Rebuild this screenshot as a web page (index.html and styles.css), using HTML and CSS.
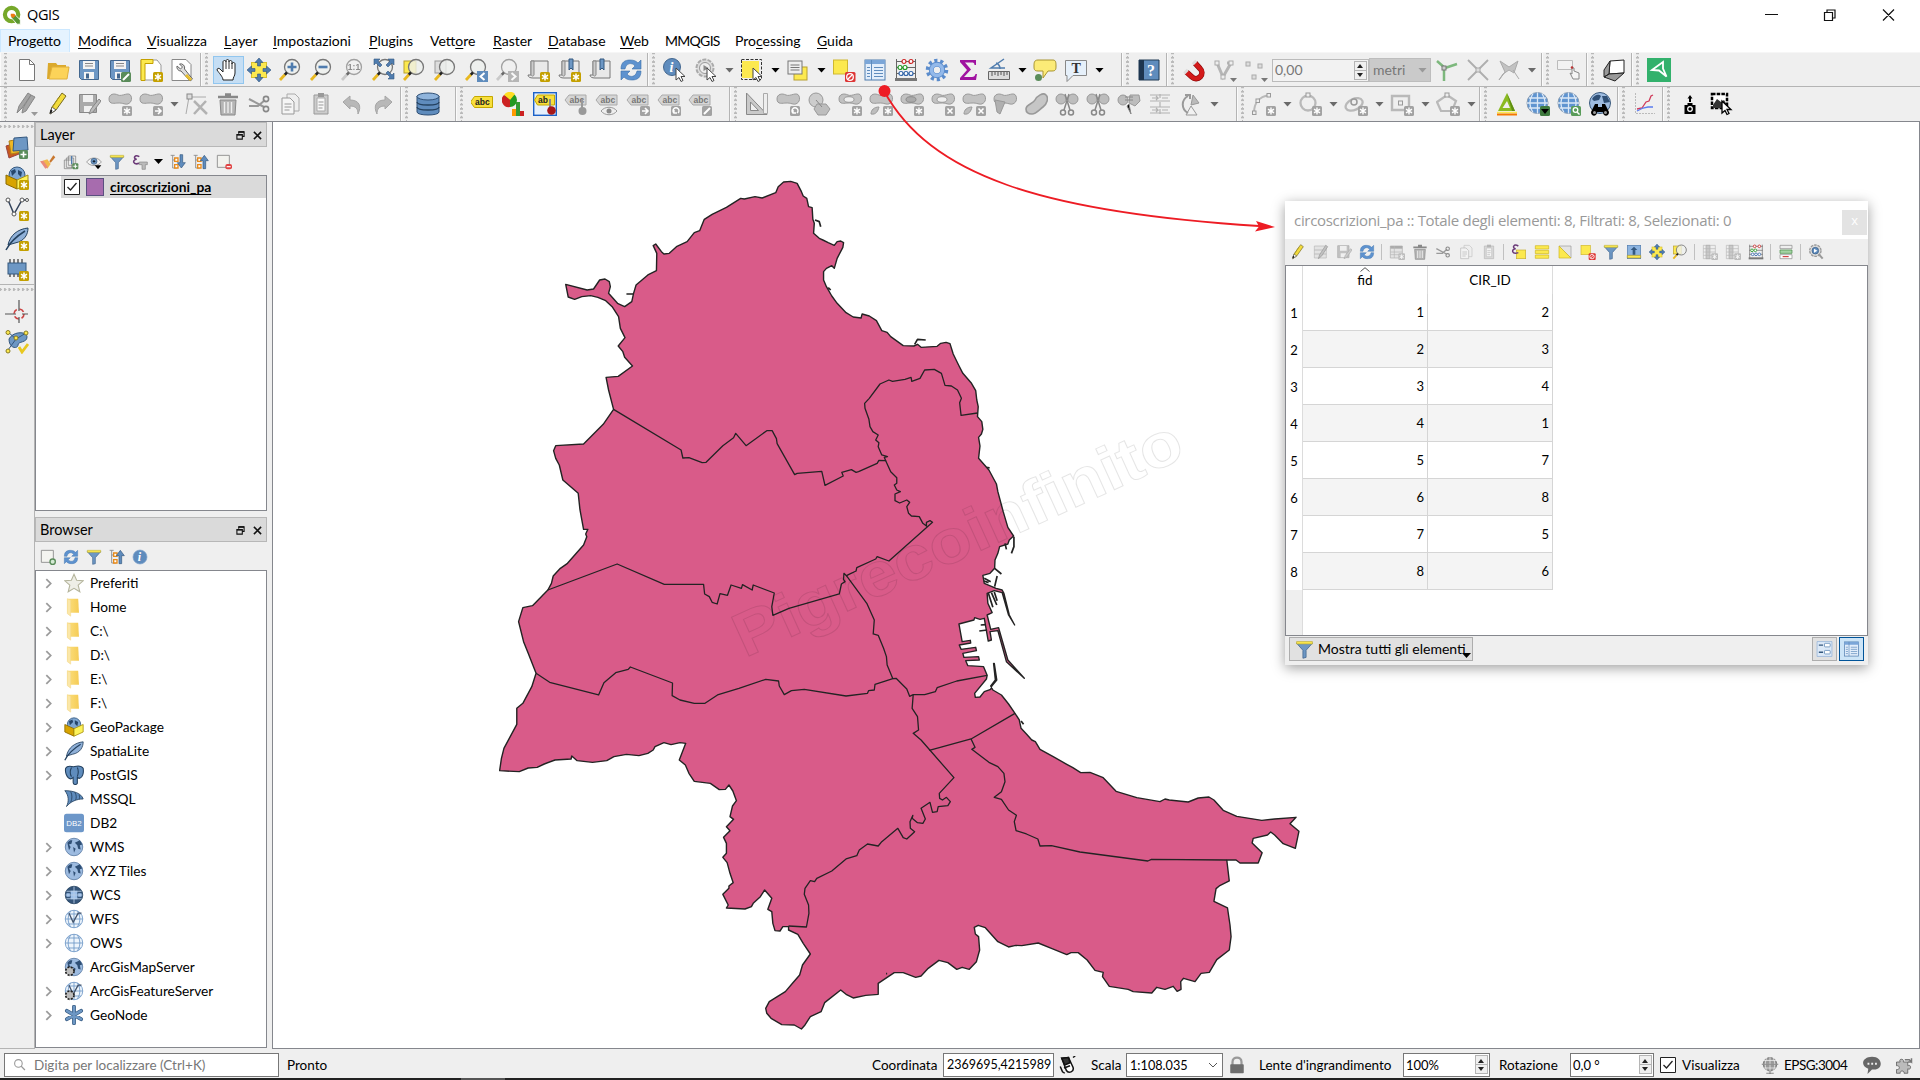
FILE: index.html
```html
<!DOCTYPE html>
<html lang="it">
<head>
<meta charset="utf-8">
<title>QGIS</title>
<link rel="stylesheet" href="styles.css">
</head>
<body>
<svg class="defs" xmlns="http://www.w3.org/2000/svg">
<defs>
<g id="bs"><rect x="14" y="14" width="10" height="10" rx="1.5" fill="#c4a000"/><path d="M19 15.5v7M16 17.2l6 3.6M22 17.2l-6 3.6" stroke="#fff" stroke-width="1.5"/></g>
<g id="bg"><rect x="14" y="14" width="10" height="10" rx="1.5" fill="#a2a2a2"/><path d="M19 15.5v7M16 17.2l6 3.6M22 17.2l-6 3.6" stroke="#fff" stroke-width="1.4"/></g>
<g id="bx"><rect x="14" y="14" width="10" height="10" rx="1.5" fill="#a2a2a2"/><path d="M16.500 16.500l5 5m0-5l-5 5" stroke="#fff" stroke-width="1.6"/></g>
<g id="bplus"><rect x="14" y="14" width="9" height="9" rx="1.500" fill="#5a8c5a"/><path d="M18.500 15.500v6M15.500 18.500h6" stroke="#fff" stroke-width="1.600"/></g>
<g id="bd"><rect x="14" y="14" width="10" height="10" rx="1.5" fill="#a2a2a2"/></g>
<g id="cur"><path d="M13 10v12l3-2.500 2 4 2-1-2-4h4z" fill="#fff" stroke="#444" stroke-width="1"/></g>
<g id="lens"><circle cx="14" cy="9" r="7.500" fill="#eef0ee" fill-opacity=".8" stroke="#777" stroke-width="1.300"/><path d="M9 14.500L6.500 17" stroke="#222" stroke-width="2.500"/><path d="M6.800 16.800L2 22" stroke="#e8b820" stroke-width="2.800"/></g>
<g id="blob"><path d="M1 7c0-5 5-6 9-4s11-4 13 1-2 9-6 8-4-1-7-1-9 2-9-4z" fill="#c2c2c2" stroke="#9a9a9a"/></g>
<g id="tag"><path d="M1 8l4-5h17v10H5z" fill="#d6d6d6" stroke="#aaa"/><text x="5.500" y="11" font-size="8.500" font-weight="700" fill="#777" font-family="Liberation Sans">abc</text></g>
<g id="globe"><circle cx="12" cy="12" r="10.500" fill="#9dbbe0" stroke="#5a7ba3"/><path d="M4 7c3-4 5-3 6-3l-1 4-3 1 2 3-2 4zM13 7l6-3 3 5-3 1 1 5-3-1-1-4zM11 12l3 2-2 5z" fill="#2f4f75"/></g>
<g id="wire"><circle cx="12" cy="12" r="10.500" fill="#eef5fc" stroke="#6b95c5"/><path d="M1.500 12h21M4 6h16M4 18h16M12 1.500v21M8 2.500c-4 6-4 13 0 19M16 2.500c4 6 4 13 0 19" fill="none" stroke="#6b95c5"/></g>
<g id="funnel0"><path d="M2 4h20l-8 9v9l-4 1v-10z" fill="#6d97c4" stroke="#43678f"/><path d="M2 2h20v3H2z" fill="#fce94f" stroke="#b8a830" stroke-width=".8"/></g>
<linearGradient id="yg"><stop offset="0" stop-color="#fce080"/><stop offset="1" stop-color="#f5cb55"/></linearGradient>
<symbol id="qgis" viewBox="0 0 24 24"><circle cx="11.500" cy="11.500" r="8" fill="none" stroke="#76a82a" stroke-width="5"/><path d="M11 11l4 0 7 7v5h-4l-7-8z" fill="#589632" stroke="#fff"/><path d="M10.500 10.500h4l2 2-3 3-3-2z" fill="#ee7913"/></symbol>
<symbol id="new" viewBox="0 0 24 24"><path d="M4.500 1.500h10l5 5v16h-15z" fill="#fff" stroke="#777"/><path d="M14.500 1.500v5h5" fill="none" stroke="#777"/></symbol>
<symbol id="open" viewBox="0 0 24 24"><path d="M2 5h8l1.500 2H20v4H6L3 21H1z" fill="#dba92c"/><path d="M3 21L6 9h17l-2 12z" fill="#fcd359" stroke="#e0b03a"/></symbol>
<symbol id="save" viewBox="0 0 24 24"><path d="M2.500 2.500h19v19h-17l-2-2z" fill="#6d97c4" stroke="#43678f"/><path d="M6 3h12v8H6z" fill="#f4f4f4"/><path d="M8 5.500h8M8 8h8" stroke="#888"/><path d="M7 14h10v7H7z" fill="#f4f4f4"/><path d="M9 15.500h3v5H9z" fill="#43678f"/></symbol>
<symbol id="saveas" viewBox="0 0 24 24"><use href="#save"/><rect x="13" y="14" width="10" height="10" rx="1.500" fill="#5a8c5a"/><path d="M15 22l6-6" stroke="#fff" stroke-width="2"/></symbol>
<symbol id="layout" viewBox="0 0 24 24"><path d="M2 2h16l4 5v15H2z" fill="#fff" stroke="#999"/><path d="M2 1.500h12v4H6v17H2z" fill="#fce94f" stroke="#c4a000"/><use href="#bs"/></symbol>
<symbol id="wrench" viewBox="0 0 24 24"><path d="M2 1.500h14l5 5v16H2z" fill="#fff" stroke="#888"/><path d="M7 8a4 4 0 0 0 4 5l9 10 2.500-2-8-10a4 4 0 0 0-5-5l3 3-2 2z" fill="#ddd" stroke="#666"/><path d="M16 17l5 5" stroke="#e8c030" stroke-width="3"/></symbol>
<symbol id="pan" viewBox="0 0 24 24"><path d="M7 22c0-3-4-7-6-10 0-2 2-2 3-1l3 3V4c0-2 3-2 3 0v-1c0-2 3-2 3 0v1c0-2 3-2 3 0v2c0-2 3-2 3 0v9c0 3-2 4-2 7z" fill="#fff" stroke="#222"/><path d="M10 4v7M13 4v7M16 5v6" stroke="#333" fill="none"/></symbol>
<symbol id="pansel" viewBox="0 0 24 24"><rect x="4.500" y="4.500" width="15" height="15" fill="#fce94f" stroke="#d8c030"/><path d="M12 0l4 4.500h-2.500V8h-3V4.500H8zM12 24l4-4.500h-2.500V16h-3v3.500H8zM0 12l4.500-4v2.500H8v3H4.500V16zM24 12l-4.500-4v2.500H16v3h3.500V16z" fill="#4f7cae" stroke="#2f5680" stroke-width=".6"/></symbol>
<symbol id="zin" viewBox="0 0 24 24"><use href="#lens"/><path d="M14 4.500v9M9.500 9h9" stroke="#4f7cae" stroke-width="2.600"/></symbol>
<symbol id="zout" viewBox="0 0 24 24"><use href="#lens"/><path d="M9.500 9h9" stroke="#4f7cae" stroke-width="2.600"/></symbol>
<symbol id="z11" viewBox="0 0 24 24"><use href="#lens"/><text x="14" y="12" text-anchor="middle" font-size="8.500" font-weight="700" fill="#555" font-family="Liberation Sans">1:1</text></symbol>
<symbol id="zfull" viewBox="0 0 24 24"><use href="#lens"/><path d="M3 1h6L7 3l4 4-2 2-4-4-2 2zM23 1h-6l2 2-4 4 2 2 4-4 2 2zM23 21h-6l2-2-4-4 2-2 4 4 2-2z" fill="#4f7cae" stroke="#34587f" stroke-width=".6"/></symbol>
<symbol id="zsel" viewBox="0 0 24 24"><rect x="2" y="3" width="12" height="12" fill="#fce94f" stroke="#b8a030"/><use href="#lens"/></symbol>
<symbol id="zlay" viewBox="0 0 24 24"><rect x="2" y="3" width="11" height="12" fill="#ddd" stroke="#999"/><use href="#lens"/></symbol>
<symbol id="zlast" viewBox="0 0 24 24"><use href="#lens"/><rect x="13" y="13" width="11" height="11" fill="#5f8cbd"/><path d="M20.500 15l-4 3.500 4 3.500" fill="none" stroke="#fff" stroke-width="2"/></symbol>
<symbol id="znext" viewBox="0 0 24 24"><use href="#lens"/><rect x="13" y="13" width="11" height="11" fill="#999"/><path d="M16.500 15l4 3.500-4 3.500" fill="none" stroke="#fff" stroke-width="2"/></symbol>
<symbol id="mapv" viewBox="0 0 24 24"><path d="M5 3h17v17H7c-3 0-5-1-5-3h3z" fill="#e9e9e9" stroke="#777"/><path d="M5 3v13c0 2 2 3 3 1V3z" fill="#ccc" stroke="#888"/></symbol>
<symbol id="mapn" viewBox="0 0 24 24"><use href="#mapv"/><use href="#bs"/></symbol>
<symbol id="bmk" viewBox="0 0 24 24"><use href="#mapv"/><path d="M12 1h4v11l-2-2-2 2z" fill="#6d97c4" stroke="#34587f"/></symbol>
<symbol id="bmn" viewBox="0 0 24 24"><use href="#mapv"/><path d="M12 1h4v11l-2-2-2 2z" fill="#6d97c4" stroke="#34587f"/><use href="#bs"/></symbol>
<symbol id="refresh" viewBox="0 0 24 24"><path d="M2 11C2 4 6 2 11 2c4 0 6 1 8 3l3-3v9h-9l3-3c-3-4-9-3-10 3zM22 13c0 7-4 9-9 9-4 0-6-1-8-3l-3 3v-9h9l-3 3c3 4 9 3 10-3z" fill="#5d92cf" stroke="#3b6ea8" stroke-width=".6"/></symbol>
<symbol id="info" viewBox="0 0 24 24"><circle cx="9" cy="9" r="8.500" fill="#5f8cbd" stroke="#43678f"/><text x="6.500" y="14" font-size="14" font-style="italic" font-weight="700" fill="#fff" font-family="Liberation Serif">i</text><use href="#cur"/></symbol>
<symbol id="inf" viewBox="0 0 24 24"><circle cx="12" cy="12" r="10.500" fill="#5f8cbd" stroke="#7fa3cb"/><text x="8.500" y="18" font-size="18" font-style="italic" font-weight="700" fill="#fff" font-family="Liberation Serif">i</text></symbol>
<symbol id="action" viewBox="0 0 24 24"><circle cx="11" cy="10" r="8.500" fill="#ddd" stroke="#aaa" stroke-width="2" stroke-dasharray="4 1.300"/><circle cx="11" cy="10" r="5.500" fill="#eee" stroke="#999"/><path d="M9.500 7v6l5-3z" fill="#888"/><use href="#cur"/></symbol>
<symbol id="select" viewBox="0 0 24 24"><rect x="2" y="3" width="17" height="17" fill="#fce94f"/><rect x="1.500" y="1.500" width="20" height="20" fill="none" stroke="#333" stroke-dasharray="3 1.500"/><use href="#cur"/></symbol>
<symbol id="selform" viewBox="0 0 24 24"><rect x="8" y="9" width="13" height="13" fill="#fce94f" stroke="#b8a030"/><rect x="2" y="3" width="14" height="13" fill="#eee" stroke="#777"/><path d="M4.500 7h9M4.500 9.500h9M4.500 12h9" stroke="#777"/></symbol>
<symbol id="desel" viewBox="0 0 24 24"><rect x="1.500" y="2" width="14" height="14" fill="#fce94f" stroke="#d0b830"/><rect x="13" y="14" width="10.500" height="10" rx="1.500" fill="#dd3434"/><circle cx="18" cy="19" r="3.300" fill="none" stroke="#fff" stroke-width="1.300"/><path d="M16 21l4-4" stroke="#fff" stroke-width="1.300"/></symbol>
<symbol id="table" viewBox="0 0 24 24"><rect x="2" y="2" width="20" height="20" fill="#e3eefb" stroke="#4f7cae"/><path d="M2 2h20v4H2z" fill="#7ba6d8"/><path d="M8.500 2v20M4 9.500h3M4 12.500h3M4 15.500h3M4 18.500h3M11 9.500h9M11 12.500h9M11 15.500h9M11 18.500h9" stroke="#5f8cbd"/></symbol>
<symbol id="abacus" viewBox="0 0 24 24"><path d="M2.500 1v21M21.500 1v21M2 3.500h20M2 9.500h20M2 15.500h20" stroke="#666" fill="none"/><path d="M1 20h22v3H1z" fill="#777"/><g fill="#fff" stroke-width="1.200"><g stroke="#c22"><circle cx="10" cy="3.500" r="2"/><circle cx="17" cy="3.500" r="2"/></g><g stroke="#292"><circle cx="6" cy="9.500" r="2"/><circle cx="11" cy="9.500" r="2"/></g><g stroke="#36a"><circle cx="7" cy="15.500" r="2"/><circle cx="12" cy="15.500" r="2"/><circle cx="17" cy="15.500" r="2"/></g></g></symbol>
<symbol id="gear" viewBox="0 0 24 24"><circle cx="12" cy="12" r="9" fill="none" stroke="#5b8ccc" stroke-width="4.500" stroke-dasharray="3 2.650"/><circle cx="12" cy="12" r="5.700" fill="none" stroke="#5b8ccc" stroke-width="5"/><circle cx="12" cy="12" r="5.500" fill="none" stroke="#93b9ea" stroke-width="3.500"/><circle cx="12" cy="12" r="2.800" fill="#efefef"/></symbol>
<symbol id="sigma" viewBox="0 0 24 24"><path d="M4 2h16v5h-1.500c0-2-1-2.500-3-2.500H9l6 7-7 7.500h8c2 0 3-1 3.500-3H21L20 22H4v-2l7-8-7-8z" fill="#a012a0"/></symbol>
<symbol id="measure" viewBox="0 0 24 24"><path d="M1.500 13.500h21v8h-21z" fill="#ddd" stroke="#666"/><path d="M5 14v4M8 14v3M11 14v4M14 14v3M17 14v4M20 14v3" stroke="#555"/><path d="M17 1L4 10h14M9 5c3 1 4 3 4 6" fill="none" stroke="#4f7cae" stroke-width="1.500"/></symbol>
<symbol id="tip" viewBox="0 0 24 24"><path d="M5 2h15c3 0 3 3 3 6s0 5-4 5h-4l-5 7 0-7H5c-4 0-4-2-4-5s0-6 4-6z" fill="#fceb77" stroke="#a89430"/><circle cx="5.500" cy="19.500" r="3.500" fill="#5a8c5a"/></symbol>
<symbol id="textt" viewBox="0 0 24 24"><path d="M1.500 2.500h21v15H9l-6 6v-6H1.500z" fill="#e6f0fa" stroke="#888"/><text x="7.500" y="15" font-size="14" font-weight="700" fill="#333" font-family="Liberation Serif">T</text></symbol>
<symbol id="help" viewBox="0 0 24 24"><path d="M2 2h20v20H2z" fill="#5f8cbd" stroke="#213a55"/><path d="M2 2h5v20H2z" fill="#1d3550"/><text x="10" y="18" font-size="16" font-weight="700" fill="#fff" font-family="Liberation Serif">?</text></symbol>
<symbol id="magnet" viewBox="0 0 24 24"><path d="M13 5l5 5.500a5.600 5.600 0 0 1-8 8.500L4.500 14" fill="none" stroke="#8c0a0a" stroke-width="5.600"/><path d="M13 5l5 5.500a5.600 5.600 0 0 1-8 8.500L4.500 14" fill="none" stroke="#d41a1a" stroke-width="4.400"/><path d="M11.500 3.500l2 2M3 12.500l2 2" stroke="#ddd" stroke-width="5"/></symbol>
<symbol id="vsnap" viewBox="0 0 24 24"><path d="M4 5l6 14L18 5M14 5h4" fill="none" stroke="#b5b5b5" stroke-width="3"/><g fill="#eee" stroke="#aaa"><rect x="2" y="3" width="4" height="4"/><rect x="16" y="3" width="4" height="4"/><rect x="8" y="17" width="4" height="4"/></g><path d="M17 20h7l-3.500 4z" fill="#777"/></symbol>
<symbol id="dots" viewBox="0 0 24 24"><g fill="#ddd" stroke="#aaa"><rect x="2" y="4" width="4" height="4"/><rect x="14" y="6" width="4" height="4"/><rect x="8" y="17" width="4" height="4"/></g><path d="M17 20h7l-3.500 4z" fill="#777"/></symbol>
<symbol id="topo" viewBox="0 0 24 24"><path d="M2 3l8 7 12-4M9 10v13" fill="none" stroke="#7db87d" stroke-width="2.500"/><rect x="7" y="8" width="4" height="4" fill="#ccc" stroke="#777"/></symbol>
<symbol id="inter" viewBox="0 0 24 24"><path d="M2 2l20 20M22 2L2 22" stroke="#aeaeae" stroke-width="1.800"/><rect x="10" y="10" width="4" height="4" fill="#ddd" stroke="#aaa"/></symbol>
<symbol id="trace" viewBox="0 0 24 24"><path d="M2 22l6-8-5-11 9 6 9-6-4 12-5-3-6 4zM16 12l6 9" fill="#c2c2c2" stroke="#aaa"/></symbol>
<symbol id="rsel" viewBox="0 0 24 24"><path d="M.5 2.500h15v9H.5z" fill="#f2f2f2" stroke="#bbb"/><path d="M15 10v6l-2-1 3 6h6v-6l-5-2v-3z" fill="#f4f4f4" stroke="#888"/><circle cx="15" cy="9.500" r="1.300" fill="#b33"/></symbol>
<symbol id="box3" viewBox="0 0 24 24"><path d="M8 3l14-1v13l-15 1z" fill="#fff" stroke="#222"/><path d="M8 3L2 12v7l5-3zM2 19l11 4 9-8-15 1z" fill="#999" stroke="#222"/></symbol>
<symbol id="green" viewBox="0 0 24 24"><path d="M0 0h24v24H0z" fill="#32b16c"/><path d="M5 12L16 4v6.500l3.500 8-7.500-6z" fill="none" stroke="#fff" stroke-width="1.800"/></symbol>
<symbol id="pens" viewBox="0 0 24 24"><path d="M2 21l2-7L13 1l3 2-9 13zM7 21l1-5 8-13 4 2-9 14z" fill="#a5a5a5" stroke="#888"/><path d="M16 20h7l-3.500 4z" fill="#999"/></symbol>
<symbol id="pen" viewBox="0 0 24 24"><path d="M4 22l2-7L16 1l4 3L10 18z" fill="#f3dc3c" stroke="#776a20"/><path d="M4 22l2-7 4 3z" fill="#fff" stroke="#555"/><path d="M4.500 21l1-3" stroke="#222" stroke-width="2"/><path d="M13 5l-7 11" stroke="#a89520" fill="none"/></symbol>
<symbol id="psave" viewBox="0 0 24 24"><path d="M2.500 2.500h17v18h-17z" fill="#aaa" stroke="#888"/><path d="M6 3h10v7H6zM7 14h8v6H7z" fill="#f0f0f0"/><path d="M12 22l2-5 8-10 2 2-8 11z" fill="#bbb" stroke="#888"/></symbol>
<symbol id="padd" viewBox="0 0 24 24"><use href="#blob"/><use href="#bg"/></symbol>
<symbol id="pmove" viewBox="0 0 24 24"><use href="#blob"/><use href="#bd"/><path d="M16 19h6m-3-3l3 3-3 3" fill="none" stroke="#fff" stroke-width="1.600"/></symbol>
<symbol id="vertex" viewBox="0 0 24 24"><path d="M4 5h17M4 5L1 22" stroke="#aaa" fill="none"/><rect x="2" y="2" width="5" height="5" fill="#ddd" stroke="#888"/><path d="M9 22L21 9M9 9l13 13" stroke="#b2b2b2" stroke-width="2.500"/></symbol>
<symbol id="trash" viewBox="0 0 24 24"><path d="M4 8h16l-1 15H5z" fill="#b5b5b5" stroke="#888"/><path d="M2 5h20M9 2.500h6" stroke="#888" stroke-width="2.500"/><path d="M8.500 10v11M12 10v11M15.500 10v11" stroke="#eee" stroke-width="1.400"/></symbol>
<symbol id="cut" viewBox="0 0 24 24"><path d="M2 7l15 8M2 14h9l7-6" stroke="#999" stroke-width="2" fill="none"/><circle cx="19" cy="7" r="2.600" fill="none" stroke="#888" stroke-width="1.600"/><circle cx="19" cy="17" r="2.600" fill="none" stroke="#888" stroke-width="1.600"/></symbol>
<symbol id="copy" viewBox="0 0 24 24"><path d="M9 2h8l4 4v13H9z" fill="#eee" stroke="#aaa"/><path d="M4 6h8l4 4v12H4z" fill="#f5f5f5" stroke="#999"/><path d="M6.500 12h7M6.500 15h7M6.500 18h5" stroke="#999"/></symbol>
<symbol id="paste" viewBox="0 0 24 24"><path d="M5 3h14v19H5z" fill="#ccc" stroke="#999"/><path d="M8 6h8v13H8z" fill="#f8f8f8" stroke="#aaa"/><path d="M9 1h6v4H9z" fill="#999"/><path d="M9.500 10h5M9.500 13h5M9.500 16h4" stroke="#999"/></symbol>
<symbol id="undo" viewBox="0 0 24 24"><path d="M3 10l7-6v4c9 0 12 6 8 14 0-5-2-8-8-8v3z" fill="#b8b8b8" stroke="#a6a6a6"/></symbol>
<symbol id="redo" viewBox="0 0 24 24"><path d="M21 10l-7-6v4C5 8 2 14 6 22c0-5 2-8 8-8v3z" fill="#b8b8b8" stroke="#a6a6a6"/></symbol>
<symbol id="db" viewBox="0 0 24 24"><path d="M1 4v16c0 4 22 4 22 0V4z" fill="#5f8cbd" stroke="#2f4f75"/><ellipse cx="12" cy="4.500" rx="11" ry="3.500" fill="#8fb4dc" stroke="#2f4f75"/><path d="M1 10c0 4 22 4 22 0M1 15c0 4 22 4 22 0" fill="none" stroke="#24415f" stroke-width="1.300"/></symbol>
<symbol id="abc" viewBox="0 0 24 24"><path d="M-.5 10l4-5.500h18v11h-18z" fill="#f8df3c" stroke="#c4a800"/><text x="4" y="13" font-size="8.500" font-weight="700" fill="#222" font-family="Liberation Sans">abc</text></symbol>
<symbol id="diag" viewBox="0 0 24 24"><circle cx="8" cy="8" r="7" fill="#292"/><path d="M8 8L2 3a7 7 0 0 1 11-1z" fill="#fd2"/><path d="M8 8L2 3a7 7 0 0 0 6 12z" fill="#c22"/><path d="M10 17h4v7h-4z" fill="#f90"/><path d="M14 10h4v14h-4z" fill="#393"/><path d="M18 19h4v5h-4z" fill="#c22"/></symbol>
<symbol id="abp" viewBox="0 0 24 24"><rect x=".7" y=".7" width="22.600" height="22.600" fill="#e6f0fc" stroke="#1c62c8" stroke-width="1.400"/><path d="M1.500 8l3-5h17v10h-17z" fill="#f8df3c" stroke="#c4a800"/><text x="5" y="11" font-size="8.500" font-weight="700" fill="#222" font-family="Liberation Sans">ab</text><path d="M17 7v9" stroke="#888" stroke-width="2"/><circle cx="18.500" cy="18.500" r="4.300" fill="#a81818"/></symbol>
<symbol id="abg" viewBox="0 0 24 24"><use href="#tag"/><path d="M18 7v9" stroke="#999" stroke-width="2"/><circle cx="18.500" cy="19" r="4" fill="#999"/></symbol>
<symbol id="abe" viewBox="0 0 24 24"><use href="#tag"/><path d="M6 19c4-5 12-5 16 0-4 5-12 5-16 0z" fill="#eee" stroke="#999"/><circle cx="14" cy="19" r="2.500" fill="#888"/></symbol>
<symbol id="abm" viewBox="0 0 24 24"><use href="#tag"/><use href="#bd"/><path d="M16 19h6m-3-3l3 3-3 3" fill="none" stroke="#fff" stroke-width="1.600"/></symbol>
<symbol id="abr" viewBox="0 0 24 24"><use href="#tag"/><use href="#bd"/><path d="M17 21a3 3 0 1 1 4 0M17 18v3h3" fill="none" stroke="#fff" stroke-width="1.400"/></symbol>
<symbol id="abd" viewBox="0 0 24 24"><use href="#tag"/><use href="#bd"/><path d="M16 22l6-6" stroke="#fff" stroke-width="2"/></symbol>
<symbol id="sqr" viewBox="0 0 24 24"><path d="M1.500 1v21.500H22zM5.500 10v8.500h8z" fill="#c9c9c9" stroke="#888" fill-rule="evenodd"/><path d="M18.500 1.500h4v20h-4z" fill="#eee" stroke="#aaa"/></symbol>
<symbol id="rot" viewBox="0 0 24 24"><use href="#blob"/><use href="#bd"/><path d="M17 21a3 3 0 1 1 4 0M17 18v3h3" fill="none" stroke="#fff" stroke-width="1.400"/></symbol>
<symbol id="simp" viewBox="0 0 24 24"><circle cx="9" cy="8" r="7" fill="#ccc" stroke="#999"/><path d="M10 12h9l4 5-4 6h-8l-4-6z" fill="#bdbdbd" stroke="#999"/><path d="M9 8l6 7" stroke="#888"/></symbol>
<symbol id="ring" viewBox="0 0 24 24"><use href="#blob"/><ellipse cx="11" cy="7.500" rx="5" ry="2.800" fill="#efefef" stroke="#999"/><use href="#bg"/></symbol>
<symbol id="part" viewBox="0 0 24 24"><use href="#blob"/><path d="M2 22c0-4 3-7 8-7-1 4-3 8-8 7z" fill="#bdbdbd" stroke="#999"/><use href="#bg"/></symbol>
<symbol id="fring" viewBox="0 0 24 24"><use href="#blob"/><ellipse cx="11" cy="7.500" rx="5" ry="2.800" fill="#aaa" stroke="#888"/><use href="#bg"/></symbol>
<symbol id="dring" viewBox="0 0 24 24"><use href="#blob"/><ellipse cx="11" cy="7.500" rx="5" ry="2.800" fill="#efefef" stroke="#999"/><use href="#bx"/></symbol>
<symbol id="dpart" viewBox="0 0 24 24"><use href="#blob"/><path d="M2 22c0-4 3-7 8-7-1 4-3 8-8 7z" fill="#bdbdbd" stroke="#999"/><use href="#bx"/></symbol>
<symbol id="resh" viewBox="0 0 24 24"><use href="#blob"/><path d="M2 8l2 12 3 2 5-12z" fill="#b0b0b0" stroke="#999"/></symbol>
<symbol id="off" viewBox="0 0 24 24"><path d="M2 17c0-5 7-5 9-9s8-8 11-5 1 9-3 12-7 7-11 7-6-2-6-5z" fill="#c6c6c6" stroke="#999" stroke-width="1.600"/></symbol>
<symbol id="split" viewBox="0 0 24 24"><circle cx="6" cy="7" r="5" fill="#bdbdbd" stroke="#999"/><circle cx="18" cy="7" r="5" fill="#bdbdbd" stroke="#999"/><path d="M10 2l5 16M14 2L9 18" stroke="#888" stroke-width="1.500"/><circle cx="8" cy="20.500" r="2.500" fill="none" stroke="#888" stroke-width="1.500"/><circle cx="16" cy="20.500" r="2.500" fill="none" stroke="#888" stroke-width="1.500"/></symbol>
<symbol id="merge" viewBox="0 0 24 24"><circle cx="6" cy="8" r="5" fill="#bdbdbd" stroke="#999"/><path d="M13 3h9l1 6-5 5-6-3z" fill="#bdbdbd" stroke="#999"/><path d="M8 5h8M8 8h8M12 12l2 10-4-8" stroke="#888"/></symbol>
<symbol id="mattr" viewBox="0 0 24 24"><path d="M2 3h20M2 9h20M2 15h20M2 21h20M12 2v4M12 10v5M12 17v5M4 6h6l-2-2m2 2l-2 2M20 6h-6M4 18h6l-2-2m2 2l-2 2M20 18h-6" fill="none" stroke="#b2b2b2" stroke-width="1.200"/></symbol>
<symbol id="rots" viewBox="0 0 24 24"><path d="M12 14l6 9H7z" fill="#f2f2f2" stroke="#999"/><path d="M14 3l6 8-8 2z" fill="#bbb" stroke="#999"/><path d="M9 21C2 17 2 8 9 4M6 3h5v4" fill="none" stroke="#999" stroke-width="2"/></symbol>
<symbol id="arc" viewBox="0 0 24 24"><path d="M2 21C2 10 7 5 17 3" fill="none" stroke="#b9b9b9" stroke-width="2"/><g fill="#eee" stroke="#999"><rect x=".5" y="19" width="3.500" height="3.500"/><rect x="4" y="7" width="3.500" height="3.500"/><rect x="15" y="1.500" width="3.500" height="3.500"/></g><use href="#bg"/></symbol>
<symbol id="circ" viewBox="0 0 24 24"><circle cx="10" cy="11" r="7.500" fill="none" stroke="#b9b9b9" stroke-width="2.300"/><rect x="8" y="1" width="4" height="4" fill="#eee" stroke="#999"/><use href="#bg"/></symbol>
<symbol id="elli" viewBox="0 0 24 24"><ellipse cx="10" cy="12" rx="9" ry="5.500" fill="none" stroke="#b9b9b9" stroke-width="2.300" transform="rotate(-25 11 12)"/><circle cx="10" cy="10" r="3" fill="#eee" stroke="#999" stroke-width="1.500"/><use href="#bg"/></symbol>
<symbol id="rect" viewBox="0 0 24 24"><path d="M2 4h17v14H2z" fill="none" stroke="#b9b9b9" stroke-width="2.400"/><rect x="8.500" y="9" width="4" height="4" fill="#eee" stroke="#999"/><use href="#bg"/></symbol>
<symbol id="pent" viewBox="0 0 24 24"><path d="M11 3l9 6-4 10H5L1 10z" fill="none" stroke="#b9b9b9" stroke-width="2.200"/><rect x="9" y="1" width="4" height="4" fill="#eee" stroke="#999"/><use href="#bg"/></symbol>
<symbol id="tri" viewBox="0 0 24 24"><path d="M12 1l8 18H3zM12 9l-4.500 7H15z" fill="#8aba22" fill-rule="evenodd"/><path d="M12 1l8 18h-3z" fill="#5f8f12"/><path d="M2 20.500h20" stroke="#fce94f" stroke-width="1.500"/><path d="M2 22.500h20" stroke="#f57900" stroke-width="2"/></symbol>
<symbol id="gl1" viewBox="0 0 24 24"><circle cx="11.500" cy="11" r="10.500" fill="#5f94d0" stroke="#8a9db3"/><path d="M1 11h21M3 6h17M3 16h17M11.500 .5v21M7 1.500c-4 6-4 13 0 19M16 1.500c4 6 4 13 0 19" fill="none" stroke="#dbe8f6" stroke-width="1.300"/><rect x="14" y="14" width="10" height="10" rx="1.500" fill="#3f7a3f"/><path d="M15 17h8l-4 5z" fill="#000"/></symbol>
<symbol id="gl2" viewBox="0 0 24 24"><circle cx="11.500" cy="11" r="10.500" fill="#5f94d0" stroke="#8a9db3"/><path d="M1 11h21M3 6h17M3 16h17M11.500 .5v21M7 1.500c-4 6-4 13 0 19M16 1.500c4 6 4 13 0 19" fill="none" stroke="#dbe8f6" stroke-width="1.300"/><rect x="14" y="14" width="10" height="10" rx="1.500" fill="#5a9c5a"/><circle cx="18.500" cy="18" r="2.300" fill="none" stroke="#fff" stroke-width="1.300"/><path d="M20 20l2.500 2.500" stroke="#fff" stroke-width="1.400"/></symbol>
<symbol id="gl3" viewBox="0 0 24 24"><circle cx="12" cy="11" r="10.500" fill="#9dbbe0" stroke="#39597c"/><path d="M4 7c3-5 7-5 9-3l-2 4-5 1zM14 4l5 0 3 6-6 1z" fill="#2f4f75"/><path d="M7 12h3v3h4v-3h3l4 8c0 5-6 5-6 0h-6c0 5-6 5-6 0z" fill="#000"/><circle cx="6.500" cy="20.500" r="1.500" fill="#999"/><circle cx="17.500" cy="20.500" r="1.500" fill="#999"/></symbol>
<symbol id="plot" viewBox="0 0 24 24"><path d="M2.500 1v20.500H22" fill="none" stroke="#bbb" stroke-dasharray="2 1"/><path d="M4 17l5-1 4-6 3-1 2-5 2-1" fill="none" stroke="#d03a5a" stroke-width="1.300"/><path d="M4 19l6-3 5-1 5 0" fill="none" stroke="#5a7cf0" stroke-width="1.300"/></symbol>
<symbol id="cam" viewBox="0 0 24 24"><path d="M12 3l2.500 3.500H13V10h-2V6.500H9.500z"/><path d="M6.500 13h3v-2h5v2h3v9h-11z"/><circle cx="12" cy="17" r="2.300" fill="none" stroke="#fff" stroke-width="1.200"/></symbol>
<symbol id="snap" viewBox="0 0 24 24"><path d="M3 2h15v14H3z" fill="#fff" stroke="#000" stroke-width="2.500" stroke-dasharray="3.500 1.200"/><path d="M4 13l4-6 4 3 3-2 3 5v3H4z" fill="#333"/><path d="M13 9v12l3-2.500 2 4 2-1-2-4h4z" fill="#fff" stroke="#000" stroke-width="1.300"/></symbol>
<symbol id="layers" viewBox="0 0 24 24"><path d="M1 10l10-3 3 11-10 4z" fill="#c85a1c" stroke="#944"/><path d="M4 5l11-2 2 13-11 2z" fill="#f0b823" stroke="#b08018"/><path d="M9 2l13-1 1 13-15 1z" fill="#6d97c4" stroke="#34587f"/><use href="#bplus"/></symbol>
<symbol id="gpk" viewBox="0 0 24 24"><circle cx="12" cy="9" r="8" fill="#7ea6d2" stroke="#34587f"/><path d="M6 5l4-2 1 3-4 4zM13 4l4 2-1 5-3-3z" fill="#26466b"/><path d="M1 9l11 5v9L1 18z" fill="#d8a400" stroke="#8a6a00"/><path d="M23 9l-11 5v9l11-5z" fill="#fdf35a" stroke="#a89010"/></symbol>
<symbol id="gpkn" viewBox="0 0 24 24"><circle cx="12" cy="9" r="8" fill="#7ea6d2" stroke="#34587f"/><path d="M6 5l4-2 1 3-4 4zM13 4l4 2-1 5-3-3z" fill="#26466b"/><path d="M1 9l11 5v9L1 18z" fill="#d8a400" stroke="#8a6a00"/><path d="M23 9l-11 5v9l11-5z" fill="#fdf35a" stroke="#a89010"/><use href="#bs"/></symbol>
<symbol id="shpn" viewBox="0 0 24 24"><path d="M3 3l6 14L17 3h5" fill="none" stroke="#34445c" stroke-width="1.500"/><g fill="#fff" stroke="#555"><circle cx="3" cy="3" r="2"/><circle cx="9" cy="17" r="2"/><circle cx="17" cy="3" r="2"/><circle cx="22" cy="3" r="1.500"/></g><use href="#bs"/></symbol>
<symbol id="feather" viewBox="0 0 24 24"><path d="M3 18C5 8 13 2 23 1c0 6-3 13-13 15z" fill="#8fb0d8" stroke="#24415f"/><path d="M1 23C5 15 12 9 20 4" fill="none" stroke="#24415f" stroke-width="1.500"/></symbol>
<symbol id="feathn" viewBox="0 0 24 24"><path d="M3 18C5 8 13 2 23 1c0 6-3 13-13 15z" fill="#8fb0d8" stroke="#24415f"/><path d="M1 23C5 15 12 9 20 4" fill="none" stroke="#24415f" stroke-width="1.500"/><use href="#bs"/></symbol>
<symbol id="mem" viewBox="0 0 24 24"><path d="M5 2v18M9 2v18M13 2v18M17 2v18" stroke="#333" stroke-width="1.200"/><rect x="3" y="6" width="18" height="11" fill="#6d97c4" stroke="#34587f"/><use href="#bs"/></symbol>
<symbol id="cross" viewBox="0 0 24 24"><circle cx="14" cy="14" r="5" fill="none" stroke="#c44" stroke-width="1.600" stroke-dasharray="5 2.800"/><path d="M14 0v11M14 17v6M0 14h11M17 14h6" stroke="#555" stroke-width="1.200"/></symbol>
<symbol id="vchk" viewBox="0 0 24 24"><path d="M4 9c4-8 18-8 18-2s-9 4-9 8-9 4-9-6z" fill="#6d97c4" stroke="#34587f"/><path d="M3 2l8 7 10-6M11 9L3 20" fill="none" stroke="#34587f"/><g fill="#fce94f" stroke="#887a20"><circle cx="3" cy="2.500" r="2"/><circle cx="21" cy="3" r="2"/><circle cx="11" cy="8" r="2"/><circle cx="3" cy="21" r="2"/></g><path d="M14 17l3 5 6-8" fill="none" stroke="#e8c820" stroke-width="2.800"/></symbol>
<symbol id="brush" viewBox="0 0 24 24"><path d="M14 11l6-9 3 3-7 8z" fill="#c87830"/><path d="M4 10l7-2 5 7-5 7z" fill="#f2b84c"/><path d="M0 11l5-1 7 10-4 2z" fill="#ea8a7a"/></symbol>
<symbol id="grp" viewBox="0 0 24 24"><path d="M8 3h11v14H8zM5 6h11v14H5zM2 9h11v13H2z" fill="#eee" stroke="#777"/><path d="M13 3v12" stroke="#4f7cae" stroke-width="2"/><use href="#bplus"/></symbol>
<symbol id="eye" viewBox="0 0 24 24"><path d="M1 12C6 4 18 4 23 12 18 19 6 19 1 12z" fill="#f4f4f4" stroke="#777"/><circle cx="12" cy="11" r="4.500" fill="#6d97c4" stroke="#34587f"/><circle cx="12" cy="11" r="1.800" fill="#123"/><path d="M13 17h10l-5 6z"/></symbol>
<symbol id="funnel" viewBox="0 0 24 24"><use href="#funnel0"/></symbol>
<symbol id="eps" viewBox="0 0 24 24"><path d="M11 4C4 0 1 7 7 8c-7 1-6 9 4 6" fill="none" stroke="#6b3a78" stroke-width="2.300"/><path d="M11 12h12v4h-3v7h-5v-7h-4z" fill="#bbb" stroke="#888"/></symbol>
<symbol id="expd" viewBox="0 0 24 24"><path d="M1 2h6M4 2v19h6M4 9h4" stroke="#888" fill="none" stroke-width="1.300"/><path d="M7 6h5v5H7zM7 16h5v5H7z" fill="#fff" stroke="#e88a1a" stroke-width="2"/><path d="M15 1h4v12h4l-6 8-6-8h4z" fill="#5f8cbd" stroke="#34587f"/></symbol>
<symbol id="colu" viewBox="0 0 24 24"><path d="M1 2h6M4 2v19h6M4 9h4" stroke="#888" fill="none" stroke-width="1.300"/><path d="M7 6h5v5H7zM7 16h5v5H7z" fill="#fff" stroke="#e88a1a" stroke-width="2"/><path d="M15 22h4V10h4l-6-8-6 8h4z" fill="#5f8cbd" stroke="#34587f"/></symbol>
<symbol id="rem" viewBox="0 0 24 24"><path d="M2 2h18v18H2z" fill="#f2f2ee" stroke="#888" stroke-width="1.300"/><rect x="14" y="15" width="10" height="8" rx="3" fill="#e04343"/><path d="M16 19h6" stroke="#fff" stroke-width="1.800"/></symbol>
<symbol id="addl" viewBox="0 0 24 24"><path d="M2 2h18v18H2z" fill="#f4f4f0" stroke="#888" stroke-width="1.300"/><circle cx="19" cy="19" r="4" fill="#d4ead4" stroke="#5a8c5a" stroke-width="2"/></symbol>
<symbol id="star" viewBox="0 0 24 24"><path d="M12 1.500l3.200 7.200 7.800.7-6 5.200 2 8-7-4.200-7 4.200 2-8-6-5.200 7.800-.7z" fill="#eeeee6" stroke="#b4b49c" stroke-width="1.300"/></symbol>
<symbol id="fold" viewBox="0 0 24 24"><path d="M4 2h13l1 17H4z" fill="url(#yg)"/><path d="M4 2l4 2v19l-4-3z" fill="#fbe7a8" stroke="#f3d585" stroke-width=".6"/></symbol>
<symbol id="pg" viewBox="0 0 24 24"><path d="M2 4c2-4 7-2 9-2s9-3 12 2c1 6-1 11-4 12l-3-1v7c-1 2-5 2-5-1v-6c-3 2-3 2-5 1C3 14 1 8 2 4z" fill="#5f8cbd" stroke="#24415f" stroke-width="1.300"/><path d="M9 3c-2 4-2 8 0 11M16 3c2 4 1 8 0 11" fill="none" stroke="#24415f" stroke-width="1.300"/></symbol>
<symbol id="ms" viewBox="0 0 24 24"><path d="M1 2c10 0 20 3 22 10C15 12 8 15 3 21c3-6 3-13-2-19z" fill="#5f8cbd" stroke="#24415f"/><path d="M8 3c2 4 2 9 0 13M13 4c2 3 2 7 1 9M18 7c1 2 1 4 0 5" fill="none" stroke="#24415f"/></symbol>
<symbol id="db2" viewBox="0 0 24 24"><rect x="0" y="1" width="24" height="22" rx="3" fill="#6d97c9"/><text x="12" y="15" text-anchor="middle" font-size="9.500" fill="#fff" font-family="Liberation Sans">DB2</text></symbol>
<symbol id="wms" viewBox="0 0 24 24"><use href="#globe"/></symbol>
<symbol id="wcs" viewBox="0 0 24 24"><circle cx="12" cy="12" r="10.500" fill="#35557a" stroke="#24415f"/><path d="M8 7h8v10H8zM3 10h4v4H3zM17 10h4v4h-4z" fill="#9dc0ea"/><path d="M12 2v20M2 12h20M3 7.500h18M3 16.500h18" stroke="#b9cfe8"/></symbol>
<symbol id="wfs" viewBox="0 0 24 24"><use href="#wire"/><path d="M6 5l5 11 6-11h4" fill="none" stroke="#44546c" stroke-width="1.600"/></symbol>
<symbol id="ows" viewBox="0 0 24 24"><use href="#wire"/></symbol>
<symbol id="ams" viewBox="0 0 24 24"><use href="#globe"/><circle cx="7" cy="17" r="5" fill="#bbb" stroke="#222" stroke-dasharray="2.500 1.500" stroke-width="2"/></symbol>
<symbol id="afs" viewBox="0 0 24 24"><use href="#wire"/><path d="M6 5l5 11 6-11h4" fill="none" stroke="#44546c" stroke-width="1.600"/><circle cx="7" cy="17" r="5" fill="#bbb" stroke="#222" stroke-dasharray="2.500 1.500" stroke-width="2"/></symbol>
<symbol id="gn" viewBox="0 0 24 24"><path d="M12 2v20M3.500 7l17 10M20.500 7l-17 10" stroke="#34587f" stroke-width="4.600" stroke-linecap="round"/><path d="M12 2v20M3.500 7l17 10M20.500 7l-17 10" stroke="#6d97c4" stroke-width="3" stroke-linecap="round"/></symbol>
<symbol id="chev" viewBox="0 0 8 12"><path d="M1.500 1l5 5-5 5" fill="none" stroke="#9b9b9b" stroke-width="2"/></symbol>
<symbol id="float" viewBox="0 0 10 10"><path d="M3 3V1h6v5H7M1 4h6v5H1z" fill="none" stroke="#111" stroke-width="1.200"/><path d="M3 1.200h6M1 4.200h6" stroke="#111" stroke-width="1.600"/></symbol>
<symbol id="x" viewBox="0 0 10 10"><path d="M1 1l8 8M9 1L1 9" stroke="#111" stroke-width="1.700"/></symbol>
<symbol id="srch" viewBox="0 0 24 24"><circle cx="10" cy="10" r="7" fill="none" stroke="#999" stroke-width="2"/><path d="M15 15l7 7" stroke="#999" stroke-width="2.500"/></symbol>
<symbol id="mouse" viewBox="0 0 24 24"><path d="M5 3l9-1 6 13c2 6-6 9-9 4z" fill="#fff" stroke="#111" stroke-width="2"/><path d="M5 3l9-1 2 7-7 3zM8 16l8-3" fill="#333" stroke="#111" stroke-width="2"/><path d="M3 14l3 7 3 2M20 2l3-2" stroke="#111" stroke-width="2" fill="none"/></symbol>
<symbol id="lock" viewBox="0 0 24 24"><path d="M6 12V8c0-8 12-8 12 0v4" fill="none" stroke="#999" stroke-width="3"/><rect x="3" y="11" width="18" height="12" rx="1" fill="#6e6e6e"/></symbol>
<symbol id="crs" viewBox="0 0 24 24"><circle cx="12" cy="11" r="9" fill="#999" stroke="#666"/><path d="M2 11h20M4 6h16M4 16h16M12 1v22M8 2c-3 6-3 13 0 18M16 2c3 6 3 13 0 18" fill="none" stroke="#efefef"/><path d="M12 20v4M7 23h10M1 11h22" stroke="#666"/></symbol>
<symbol id="msg" viewBox="0 0 24 24"><path d="M12 1c15 0 15 17 3 17h-3l-6 6 1-7C-5 12 0 1 12 1z" fill="#666"/><path d="M6 9h2.500v2.500H6zM11 9h2.500v2.500H11zM16 9h2.500v2.500H16z" fill="#eee"/></symbol>
<symbol id="puz" viewBox="0 0 24 24"><path d="M2 8h5c-3-5 6-5 4 0h6v5c5-3 5 7 0 4v6h-5c1-4-6-4-5 0H2v-5c5 1 5-6 0-5z" fill="#bbb" stroke="#555"/><path d="M13 5h6l3 3v-5M22 8h-5" fill="none" stroke="#777" stroke-width="2"/></symbol>
<symbol id="calc2" viewBox="0 0 24 24"><path d="M2 3h18v18H2z" fill="#ddd" stroke="#888"/><path d="M2 3h18v4H2z" fill="#888"/><path d="M8 3v18M2 12h18M2 16h18" stroke="#999"/><use href="#bg"/></symbol>
<symbol id="fld" viewBox="0 0 24 24"><path d="M2 2h18v20H2z" fill="#eee" stroke="#999"/><path d="M6 2h6v20H6z" fill="#b5b5b5" stroke="#888"/><path d="M2 7h18M2 12h18M2 17h18" stroke="#999"/><use href="#bg"/></symbol>
<symbol id="mult" viewBox="0 0 24 24"><path d="M2 3h18v18H2z" fill="#ddd" stroke="#999"/><path d="M2 9h18M2 15h18" stroke="#888"/><path d="M8 22l2-6L19 2l3 2-9 14z" fill="#aaa" stroke="#666"/></symbol>
<symbol id="seps" viewBox="0 0 24 24"><rect x="8" y="9" width="14" height="13" fill="#fce94f" stroke="#c8b030"/><path d="M11 3C4-1 1 6 7 7c-7 1-6 9 4 6" fill="none" stroke="#6b3a78" stroke-width="2.200"/></symbol>
<symbol id="sall" viewBox="0 0 24 24"><path d="M2 2.500h20v5H2zM2 9.500h20v5H2zM2 16.500h20v5H2z" fill="#fce94f" stroke="#cdb520"/></symbol>
<symbol id="sinv" viewBox="0 0 24 24"><path d="M3 3h18v18z" fill="#e4e4e4" stroke="#999"/><path d="M3 3v18h18z" fill="#fce94f" stroke="#cdb520"/></symbol>
<symbol id="stop" viewBox="0 0 24 24"><rect x="2" y="2" width="20" height="20" fill="#8db4e0" stroke="#4f7cae"/><path d="M2 17h20v4H2z" fill="#fce94f" stroke="#a89430"/><path d="M12 4l5 5h-3v7h-4V9H7z" fill="#34587f"/></symbol>
<symbol id="cond" viewBox="0 0 24 24"><path d="M3 2h18v5H3z" fill="#eee" stroke="#888"/><path d="M3 9h18v5H3z" fill="#a4d4a4" stroke="#484"/><path d="M3 16h18v6H3z" fill="#fff" stroke="#888"/><path d="M7 19h9" stroke="#c22" stroke-width="1.500"/></symbol>
<symbol id="gear2" viewBox="0 0 24 24"><circle cx="11" cy="10" r="8.500" fill="#ddd" stroke="#999" stroke-width="2" stroke-dasharray="4 1.300"/><circle cx="11" cy="10" r="5" fill="#5f8cbd" stroke="#34587f"/><path d="M9 7v6l5-3z" fill="#fff"/><path d="M16 15l6 7" stroke="#999" stroke-width="3"/></symbol>
<symbol id="form" viewBox="0 0 24 24"><path d="M1.500 1.500h21v21h-21z" fill="#dce9f7" stroke="#8fb0d8"/><rect x="12" y="4" width="8" height="5" rx="1" fill="#fff" stroke="#4f7cae"/><rect x="12" y="14" width="8" height="5" rx="1" fill="#fff" stroke="#4f7cae"/><path d="M4 6.500h6M4 16.500h6" stroke="#34587f" stroke-width="2"/></symbol>
</defs>
</svg>

<header class="titlebar">
  <svg class="logo"><use href="#qgis"/></svg><span class="apptitle">QGIS</span>
  <svg class="winbtns" viewBox="0 0 160 28"><path d="M14 13.500h13M73.500 11.500h8v8h-8zM76 11V9h8v8h-2M132 8.500l11 11M143 8.500l-11 11" fill="none" stroke="#111" stroke-width="1.200"/></svg>
</header>
<nav class="menubar">
  <span class="hot">Progetto</span><span><u>M</u>odifica</span><span><u>V</u>isualizza</span><span><u>L</u>ayer</span><span><u>I</u>mpostazioni</span><span><u>P</u>lugins</span><span>Vett<u>o</u>re</span><span><u>R</u>aster</span><span><u>D</u>atabase</span><span><u>W</u>eb</span><span class="tight">MMQGIS</span><span>Pro<u>c</u>essing</span><span><u>G</u>uida</span>
</nav>

<div class="toolrow r1">
  <div class="tb w200"><svg class="i"><use href="#new"/></svg><svg class="i"><use href="#open"/></svg><svg class="i"><use href="#save"/></svg><svg class="i"><use href="#saveas"/></svg><svg class="i"><use href="#layout"/></svg><svg class="i"><use href="#wrench"/></svg></div>
  <div class="tb w447"><span class="act"><svg class="i"><use href="#pan"/></svg></span><svg class="i"><use href="#pansel"/></svg><svg class="i"><use href="#zin"/></svg><svg class="i"><use href="#zout"/></svg><svg class="i dis"><use href="#z11"/></svg><svg class="i"><use href="#zfull"/></svg><svg class="i"><use href="#zsel"/></svg><svg class="i"><use href="#zlay"/></svg><svg class="i"><use href="#zlast"/></svg><svg class="i dis"><use href="#znext"/></svg><svg class="i"><use href="#mapn"/></svg><svg class="i"><use href="#bmn"/></svg><svg class="i"><use href="#bmk"/></svg><svg class="i"><use href="#refresh"/></svg></div>
  <div class="tb w474"><svg class="i"><use href="#info"/></svg><svg class="i"><use href="#action"/></svg><b class="car g"></b><svg class="i"><use href="#select"/></svg><b class="car"></b><svg class="i"><use href="#selform"/></svg><b class="car"></b><svg class="i"><use href="#desel"/></svg><svg class="i"><use href="#table"/></svg><svg class="i"><use href="#abacus"/></svg><svg class="i"><use href="#gear"/></svg><svg class="i"><use href="#sigma"/></svg><svg class="i"><use href="#measure"/></svg><b class="car"></b><svg class="i"><use href="#tip"/></svg><svg class="i"><use href="#textt"/></svg><b class="car"></b></div>
  <div class="tb w45"><svg class="i"><use href="#help"/></svg></div>
  <div class="tb w375"><svg class="i"><use href="#magnet"/></svg><svg class="i"><use href="#vsnap"/></svg><svg class="i"><use href="#dots"/></svg><span class="spin dim">0,00<i></i></span><span class="combo dim">metri<b class="car g"></b></span><svg class="i"><use href="#topo"/></svg><svg class="i"><use href="#inter"/></svg><svg class="i"><use href="#trace"/></svg><b class="car g"></b></div>
  <div class="tb w45"><svg class="i"><use href="#rsel"/></svg></div>
  <div class="tb w45"><svg class="i"><use href="#box3"/></svg></div>
  <div class="tb last"><svg class="i"><use href="#green"/></svg></div>
</div>
<div class="toolrow r2">
  <div class="tb w400"><svg class="i"><use href="#pens"/></svg><svg class="i"><use href="#pen"/></svg><svg class="i"><use href="#psave"/></svg><svg class="i"><use href="#padd"/></svg><svg class="i"><use href="#pmove"/></svg><b class="car g"></b><svg class="i"><use href="#vertex"/></svg><svg class="i"><use href="#trash"/></svg><svg class="i"><use href="#cut"/></svg><svg class="i"><use href="#copy"/></svg><svg class="i"><use href="#paste"/></svg><svg class="i"><use href="#undo"/></svg><svg class="i"><use href="#redo"/></svg></div>
  <div class="tb w55"><svg class="i"><use href="#db"/></svg></div>
  <div class="tb w274"><svg class="i"><use href="#abc"/></svg><svg class="i"><use href="#diag"/></svg><svg class="i"><use href="#abp"/></svg><svg class="i"><use href="#abg"/></svg><svg class="i"><use href="#abe"/></svg><svg class="i"><use href="#abm"/></svg><svg class="i"><use href="#abr"/></svg><svg class="i"><use href="#abd"/></svg></div>
  <div class="tb w507"><svg class="i"><use href="#sqr"/></svg><svg class="i"><use href="#rot"/></svg><svg class="i"><use href="#simp"/></svg><svg class="i"><use href="#ring"/></svg><svg class="i"><use href="#part"/></svg><svg class="i"><use href="#fring"/></svg><svg class="i"><use href="#dring"/></svg><svg class="i"><use href="#dpart"/></svg><svg class="i"><use href="#resh"/></svg><svg class="i"><use href="#off"/></svg><svg class="i"><use href="#split"/></svg><svg class="i"><use href="#split"/></svg><svg class="i"><use href="#merge"/></svg><svg class="i"><use href="#mattr"/></svg><svg class="i"><use href="#rots"/></svg><b class="car g"></b></div>
  <div class="tb w243"><svg class="i"><use href="#arc"/></svg><b class="car g"></b><svg class="i"><use href="#circ"/></svg><b class="car g"></b><svg class="i"><use href="#elli"/></svg><b class="car g"></b><svg class="i"><use href="#rect"/></svg><b class="car g"></b><svg class="i"><use href="#pent"/></svg><b class="car g"></b></div>
  <div class="tb w138"><svg class="i"><use href="#tri"/></svg><svg class="i"><use href="#gl1"/></svg><svg class="i"><use href="#gl2"/></svg><svg class="i"><use href="#gl3"/></svg></div>
  <div class="tb w45"><svg class="i"><use href="#plot"/></svg></div>
  <div class="tb last"><svg class="i"><use href="#cam"/></svg><svg class="i"><use href="#snap"/></svg></div>
</div>

<div class="work">
  <aside class="strip">
    <div class="sgroup a"><svg><use href="#layers"/></svg><svg><use href="#gpkn"/></svg><svg><use href="#shpn"/></svg><svg><use href="#feathn"/></svg><svg><use href="#mem"/></svg></div>
    <div class="sgroup"><svg><use href="#cross"/></svg><svg><use href="#vchk"/></svg></div>
  </aside>
  <div class="docks">
    <section class="dock">
      <h2>Layer<svg><use href="#float"/></svg><svg><use href="#x"/></svg></h2>
      <div class="mini"><svg><use href="#brush"/></svg><svg><use href="#grp"/></svg><svg><use href="#eye"/></svg><svg><use href="#funnel"/></svg><svg><use href="#eps"/></svg><b class="car"></b><svg><use href="#expd"/></svg><svg><use href="#colu"/></svg><svg><use href="#rem"/></svg></div>
      <div class="tree lay"><div class="layer"><svg class="chk" viewBox="0 0 16 16"><path d="M.5.5h15v15H.5z" fill="#fff" stroke="#222"/><path d="M3.500 8l3 3 6-7" fill="none" stroke="#222" stroke-width="1.300"/></svg><i></i><strong>circoscrizioni_pa</strong></div></div>
    </section>
    <section class="dock second">
      <h2>Browser<svg><use href="#float"/></svg><svg><use href="#x"/></svg></h2>
      <div class="mini"><svg><use href="#addl"/></svg><svg><use href="#refresh"/></svg><svg><use href="#funnel"/></svg><svg><use href="#colu"/></svg><svg><use href="#inf"/></svg></div>
      <ul class="tree">
        <li><svg class="ch"><use href="#chev"/></svg><svg><use href="#star"/></svg>Preferiti</li>
        <li><svg class="ch"><use href="#chev"/></svg><svg><use href="#fold"/></svg>Home</li>
        <li><svg class="ch"><use href="#chev"/></svg><svg><use href="#fold"/></svg>C:\</li>
        <li><svg class="ch"><use href="#chev"/></svg><svg><use href="#fold"/></svg>D:\</li>
        <li><svg class="ch"><use href="#chev"/></svg><svg><use href="#fold"/></svg>E:\</li>
        <li><svg class="ch"><use href="#chev"/></svg><svg><use href="#fold"/></svg>F:\</li>
        <li><svg class="ch"><use href="#chev"/></svg><svg><use href="#gpk"/></svg>GeoPackage</li>
        <li><svg class="ch"><use href="#chev"/></svg><svg><use href="#feather"/></svg>SpatiaLite</li>
        <li><svg class="ch"><use href="#chev"/></svg><svg><use href="#pg"/></svg>PostGIS</li>
        <li><svg class="ch"></svg><svg><use href="#ms"/></svg>MSSQL</li>
        <li><svg class="ch"></svg><svg><use href="#db2"/></svg>DB2</li>
        <li><svg class="ch"><use href="#chev"/></svg><svg><use href="#wms"/></svg>WMS</li>
        <li><svg class="ch"><use href="#chev"/></svg><svg><use href="#wms"/></svg>XYZ Tiles</li>
        <li><svg class="ch"><use href="#chev"/></svg><svg><use href="#wcs"/></svg>WCS</li>
        <li><svg class="ch"><use href="#chev"/></svg><svg><use href="#wfs"/></svg>WFS</li>
        <li><svg class="ch"><use href="#chev"/></svg><svg><use href="#ows"/></svg>OWS</li>
        <li><svg class="ch"></svg><svg><use href="#ams"/></svg>ArcGisMapServer</li>
        <li><svg class="ch"><use href="#chev"/></svg><svg><use href="#afs"/></svg>ArcGisFeatureServer</li>
        <li><svg class="ch"><use href="#chev"/></svg><svg><use href="#gn"/></svg>GeoNode</li>
      </ul>
    </section>
  </div>
  <main class="canvas">
    <svg class="map" viewBox="273 122 1646 926">
      <g transform="translate(480 160) scale(.35714 .33333)">
        <path class="land" d="M850 66L870 64 888 70 900 95 905 108 915 115 920 140 930 143 932 178 936 190 934 220 950 235 960 240 975 248 992 256 1000 245 1010 243 1018 248 1016 262 1000 295 992 325 985 317 970 325 962 335 962 360 970 380 985 408 1000 430 1025 458 1045 471 1067 474 1070 462 1090 468 1110 482 1125 512 1140 517 1150 530 1185 557 1215 558 1225 553 1235 562 1280 559 1290 550 1305 547 1316 551 1325 582 1340 615 1352 640 1375 668 1388 692 1391 720 1395 740 1393 770 1405 785 1408 808 1404 822 1396 832 1400 858 1396 895 1425 930 1446 972 1450 995 1460 1035 1465 1055 1478 1102 1494 1128 1482 1140 1478 1152 1455 1160 1450 1180 1442 1200 1441 1225 1428 1240 1408 1246 1412 1270 1445 1285 1462 1290 1467 1300 1482 1365 1497 1395 1480 1365 1462 1298 1440 1292 1420 1300 1422 1330 1434 1358 1420 1365 1430 1408 1452 1403 1478 1500 1524 1555 1474 1505 1450 1412 1428 1415 1432 1440 1423 1443 1412 1375 1400 1378 1385 1373 1383 1380 1341 1392 1350 1445 1373 1441 1374 1449 1342 1455 1347 1468 1388 1462 1390 1472 1352 1480 1355 1492 1396 1490 1398 1500 1360 1502 1366 1517 1410 1520 1420 1546 1418 1557 1385 1600 1387 1612 1400 1611 1412 1595 1430 1588 1433 1578 1447 1560 1440 1510 1438 1510 1443 1560 1430 1578 1436 1590 1460 1605 1480 1632 1498 1660 1510 1680 1515 1705 1530 1722 1545 1740 1555 1745 1568 1768 1605 1790 1643 1813 1660 1823 1682 1838 1708 1837 1745 1853 1781 1894 1839 1913 1904 1925 1918 1917 1930 1920 1983 1926 2011 1914 2041 1911 2055 1920 2081 1951 2119 1969 2189 1981 2225 1977 2285 1972 2268 1991 2293 2014 2283 2065 2249 2051 2225 2025 2214 2016 2205 2025 2165 2035 2162 2049 2190 2078 2179 2109 2128 2109 2117 2100 2091 2100 2098 2163 2070 2178 2061 2186 2055 2224 2093 2244 2100 2295 2103 2330 2098 2370 2063 2399 2042 2437 2019 2440 2002 2465 1970 2455 1962 2465 1963 2488 1952 2494 1941 2479 1918 2488 1895 2482 1881 2499 1829 2495 1815 2488 1762 2479 1743 2450 1745 2437 1722 2431 1700 2400 1675 2378 1655 2378 1643 2384 1600 2365 1563 2349 1517 2357 1500 2356 1480 2361 1450 2345 1415 2303 1395 2296 1384 2302 1387 2322 1396 2330 1399 2370 1390 2405 1370 2428 1350 2422 1335 2428 1310 2408 1285 2401 1255 2425 1235 2448 1220 2452 1185 2438 1160 2438 1140 2452 1115 2470 1115 2503 1080 2506 1045 2514 1025 2503 1010 2490 965 2528 955 2555 925 2570 910 2595 900 2607 880 2595 845 2594 815 2575 803 2560 800 2545 810 2525 855 2495 875 2470 895 2445 903 2415 925 2382 905 2350 890 2323 864 2310 864 2300 848 2300 840 2313 826 2312 820 2290 817 2255 806 2248 817 2215 797 2190 785 2210 765 2230 760 2240 742 2247 690 2244 695 2235 680 2203 697 2185 697 2178 709 2168 700 2140 692 2108 680 2092 690 2080 690 2050 682 2032 700 2012 690 2000 710 1978 700 1970 707 1938 718 1922 708 1893 697 1875 687 1888 670 1889 645 1870 600 1864 585 1840 575 1815 558 1800 576 1750 560 1748 535 1754 515 1748 490 1760 485 1770 470 1780 445 1787 410 1783 375 1790 355 1802 315 1807 272 1802 257 1788 255 1797 210 1800 180 1812 160 1822 135 1824 110 1835 55 1832 60 1795 67 1765 103 1693 103 1645 120 1630 145 1580 157 1540 135 1480 122 1445 108 1385 120 1343 147 1337 190 1290 200 1270 205 1248 225 1225 245 1210 290 1155 299 1130 296 1122 302 1108 290 1108 280 1050 275 1000 232 960 222 915 212 895 206 872 212 857 290 852 345 793 374 748 360 690 353 652 387 649 427 618 405 592 400 575 387 558 406 533 393 505 388 470 370 440 352 422 330 412 310 407 285 410 265 418 247 411 240 373 300 390 318 387 335 360 350 357 362 365 365 380 360 400 385 430 405 440 425 425 430 400 437 375 470 345 494 332 495 280 485 257 492 252 508 275 515 282 530 280 550 260 580 245 600 218 615 212 628 178 650 163 690 142 730 115 740 117 770 110 790 114 828 98 835 80Z"/>
        <g class="line">
          <path d="M374 748L563 870 568 894 585 893 622 908 633 907 680 857 710 833 716 820 745 857 803 812 818 812 830 836 832 851 881 944 888 940 957 934 966 976 1017 948 1013 937 1040 929 1053 937 1060 935 1112 910 1117 901 1136 902 1132 892 1141 890 1125 885 1115 860 1117 848 1108 840 1115 825 1100 815 1092 800 1089 778 1078 745 1077 730 1090 715 1120 672 1145 660 1155 664 1190 658 1207 652 1209 664 1232 655 1245 630 1272 628 1292 640 1302 676 1320 678 1337 690 1348 715 1343 728 1347 766 1393 759"/>
          <path d="M1136 902L1150 935 1167 953 1167 970 1160 975 1167 990 1177 995 1162 1002 1162 1022 1175 1029 1195 1020 1203 1027 1195 1040 1200 1060 1208 1068 1230 1070 1240 1090 1250 1098 1250 1087 1260 1082 1267 1087 1145 1203 1112 1190 1108 1197 1055 1223 1053 1233 1026 1247 1019 1240 1018 1258 1022 1265 1012 1272 1006 1302 865 1345 820 1366 817 1340 824 1299 765 1275 762 1290 735 1274 732 1285 703 1275 693 1306 672 1301 664 1332 650 1327 642 1310 629 1302 626 1273 516 1273 384 1212 190 1290"/>
          <path d="M1026 1247L1083 1330 1104 1380 1101 1422 1115 1426 1130 1465 1138 1490 1140 1515 1156 1556 1106 1573 1104 1590 1088 1592 1085 1600 1025 1608 908 1588 872 1592 852 1604 838 1578 836 1563 800 1558 725 1585 665 1605 630 1630 600 1630 560 1620 538 1607 539 1569 421 1521 415 1528 380 1538 347 1568 332 1605 195 1567 157 1540"/>
          <path d="M1156 1556L1165 1555 1195 1587 1203 1609 1213 1604 1245 1604 1275 1595 1280 1583 1335 1563 1420 1546M1213 1604L1210 1645 1225 1670 1228 1710 1213 1720 1235 1740 1327 1853 1286 1900 1287 1915 1295 1920 1306 1912 1317 1925 1310 1937 1283 1940 1280 1955 1267 1957 1260 1927 1235 1945 1247 1977 1240 1990 1225 1988 1210 1975 1212 1966 1204 1985 1205 2005 1217 2015 1195 2037 1185 2033 1170 2005 1125 2045 1115 2058 1085 2052 1062 2070 1055 2087 1025 2097 985 2133 943 2155 937 2165 925 2162 910 2185 908 2203 920 2235 921 2260 914 2301 864 2298"/>
          <path d="M1258 1771L1375 1737 1498 1660M1375 1737L1386 1762 1377 1768 1425 1807 1450 1820 1467 1840 1470 1865 1460 1895 1440 1912 1460 1918 1480 1950 1502 1966 1496 1985 1501 2012 1530 2022 1562 2037 1568 2058 1600 2057 1680 2076 1870 2103 1880 2098 2091 2100"/>
          <path class="quay" d="M938 180L950 185 954 200M410 402L430 402M1217 553L1225 538 1248 540M975 383L982 390M1420 922L1427 924M1495 1130L1495 1160 1488 1180M1470 1150L1474 1168M1441 1225L1460 1242M1448 1248L1441 1280M1412 1255L1430 1265M1411 1263L1424 1268M1423 1298L1436 1342M1432 1298L1447 1335M1440 1296L1448 1322M1398 1413L1420 1410M1402 1395L1416 1394M1515 1683L1522 1693M1137 2441h3"/>
        </g>
      </g>
      <text class="mark" transform="translate(745 658) rotate(-24.500)" textLength="486" lengthAdjust="spacingAndGlyphs">Pigrecoinfinito</text>
    </svg>
    <svg class="arrow" viewBox="0 0 420 160"><path d="M15 12C61 96 171 133 390 147" fill="none" stroke="#ed1c24" stroke-width="1.800"/><circle cx="15.500" cy="12" r="6" fill="#ed1c24"/><path d="M406 148l-19-6 3 5.500-4 5z" fill="#ed1c24"/></svg>
    <div class="dialog">
      <div class="dtitle"><span>circoscrizioni_pa :: Totale degli elementi: 8, Filtrati: 8, Selezionati: 0</span><em>x</em></div>
      <div class="dtools"><svg><use href="#pen"/></svg><svg class="dis"><use href="#mult"/></svg><svg class="dis"><use href="#psave"/></svg><svg><use href="#refresh"/></svg><hr><svg class="dis"><use href="#calc2"/></svg><svg><use href="#trash"/></svg><svg><use href="#cut"/></svg><svg class="dis"><use href="#copy"/></svg><svg class="dis"><use href="#paste"/></svg><hr><svg><use href="#seps"/></svg><svg><use href="#sall"/></svg><svg><use href="#sinv"/></svg><svg><use href="#desel"/></svg><svg><use href="#funnel"/></svg><svg><use href="#stop"/></svg><svg><use href="#pansel"/></svg><svg><use href="#zsel"/></svg><hr><svg class="dis"><use href="#fld"/></svg><svg class="dis"><use href="#fld"/></svg><svg><use href="#abacus"/></svg><hr><svg><use href="#cond"/></svg><hr><svg><use href="#gear2"/></svg></div>
      <div class="dbody">
        <div class="rowheads"><span></span><span>1</span><span>2</span><span>3</span><span>4</span><span>5</span><span>6</span><span>7</span><span>8</span></div>
        <table><thead><tr><th><svg viewBox="0 0 10 5"><path d="M.5 4.500L5 .7l4.500 3.800" fill="none" stroke="#555"/></svg>fid</th><th>CIR_ID</th></tr></thead>
        <tbody><tr><td>1</td><td>2</td></tr><tr><td>2</td><td>3</td></tr><tr><td>3</td><td>4</td></tr><tr><td>4</td><td>1</td></tr><tr><td>5</td><td>7</td></tr><tr><td>6</td><td>8</td></tr><tr><td>7</td><td>5</td></tr><tr><td>8</td><td>6</td></tr></tbody></table>
      </div>
      <div class="dfoot"><button class="filter"><svg><use href="#funnel"/></svg>Mostra tutti gli elementi<b class="car"></b></button><button class="vw"><svg><use href="#form"/></svg></button><button class="vw on"><svg><use href="#table"/></svg></button></div>
    </div>
  </main>
</div>

<footer class="status">
  <div class="search"><svg><use href="#srch"/></svg>Digita per localizzare (Ctrl+K)</div><span class="msg">Pronto</span>
  <span class="c1">Coordinata</span><div class="box coord">2369695,4215989</div><svg class="si"><use href="#mouse"/></svg>
  <span class="c2">Scala</span><div class="box scale">1:108.035<svg viewBox="0 0 10 6"><path d="M1 1l4 4 4-4" fill="none" stroke="#555"/></svg></div><svg class="si lk"><use href="#lock"/></svg>
  <span class="c3">Lente d'ingrandimento</span><div class="spin mag">100%<i></i></div>
  <span class="c4">Rotazione</span><div class="spin rotn">0,0 °<i></i></div>
  <svg class="chk" viewBox="0 0 16 16"><path d="M.5.5h15v15H.5z" fill="#fff" stroke="#222"/><path d="M3.500 8l3 3 6-7" fill="none" stroke="#222" stroke-width="1.300"/></svg><span class="c5">Visualizza</span>
  <svg class="si"><use href="#crs"/></svg><span class="c6">EPSG:3004</span><svg class="si"><use href="#msg"/></svg><svg class="si pz"><use href="#puz"/></svg>
</footer>
<div class="taskedge"><i></i></div>
</body>
</html>
```
FILE: styles.css
```css
* { box-sizing: border-box; }
body { margin: 0; width: 1920px; height: 1080px; overflow: hidden; display: flex; flex-direction: column; background: #efefef; color: #000; font: 14px/18px Lato, "Noto Sans", sans-serif; }
svg { flex: none; display: block; overflow: visible; }
.defs { position: absolute; width: 0; height: 0; }
u { text-decoration-thickness: 1px; text-underline-offset: 2px; }

.titlebar { height: 29px; background: #fff; display: flex; align-items: center; padding-left: 2px; flex: none; }
.logo { width: 20px; height: 20px; }
.apptitle { margin-left: 5px; font: 14.5px/20px "Open Sans", sans-serif; letter-spacing: -.4px; flex: 1; }
.winbtns { width: 160px; height: 28px; margin-right: 9px; }

.menubar { height: 23px; background: #fff; display: grid; grid-template-columns: 70px 69px 77px 49px 96px 61px 63px 55px 72px 45px 70px 82px 60px; flex: none; }
.menubar span { padding-left: 8px; line-height: 24px; white-space: nowrap; }
.menubar .tight { letter-spacing: -.7px; }
.menubar .hot { background: #e5f3ff; box-shadow: inset 0 0 0 1px #cce8ff; }

.toolrow { display: flex; background: #efefef; flex: none; }
.r1 { height: 35px; border-top: 1px solid #f6f6f6; border-bottom: 1px solid #b4b4b4; }
.r2 { height: 35px; border-bottom: 1px solid #85878d; }
.tb { display: flex; align-items: center; flex: none; padding-left: 11.500px; border-right: 1px solid #b4b4b4; background: radial-gradient(circle at 1.500px 1.500px, #b9b9b9 1.200px, transparent 1.300px) 4px 3px / 3px 4.300px repeat-y; box-shadow: inset 1px 0 #fafafa; }
.last { border: 0; width: 90px; }
.w200 { width: 201px; } .w447 { width: 447px; } .w474 { width: 474px; } .w45 { width: 45px; } .w375 { width: 375px; }
.w400 { width: 401px; } .w55 { width: 55px; } .w274 { width: 274px; } .w507 { width: 507px; } .w243 { width: 243px; } .w138 { width: 138px; }
.i { width: 24px; height: 24px; margin: 0 3.500px; }
.dis { filter: grayscale(1); opacity: .65; }
.act { background: #c5def4; box-shadow: inset 0 0 0 1px #91c6ef; padding: 2px 0; }
.car { flex: none; width: 15px; height: 5px; background: #000; clip-path: polygon(3px 0, 12px 0, 7.500px 5px); }
.car.g { background: #6a6a6a; }
.tb > .car { clip-path: polygon(3.500px 0, 12.500px 0, 8px 5px); }
.spin { background: #fff; border: 1px solid #777; height: 23px; display: flex; align-items: center; justify-content: space-between; padding: 0 1px 0 2px; }
.spin i { width: 13px; height: 19px; border: 1px solid #b5b5b5; background: linear-gradient(#b5b5b5, #b5b5b5) 0 50% / 100% 1px no-repeat, #f0f0f0; position: relative; }
.spin i::before, .spin i::after { content: ""; position: absolute; left: 2px; border: 3.500px solid transparent; border-bottom: 4px solid #222; border-top: 0; top: 2.500px; }
.spin i::after { top: 11px; border-bottom: 0; border-top: 4px solid #222; }
.spin.dim { width: 97px; margin-left: .500px; background: #f2f2f2; border-color: #bbb; color: #777; }
.combo.dim { width: 62px; height: 24px; background: #cacaca; border: 1px solid #bdbdbd; color: #777; display: flex; align-items: center; justify-content: space-between; padding-left: 3px; }
.combo .car { background: #999; }
.r1 .tb { padding-top: 1px; }

.work { display: flex; height: 927px; flex: none; }
.strip { width: 35px; border-right: 1px solid #b4b4b4; border-bottom: 1px solid #b4b4b4; display: flex; flex-direction: column; flex: none; }
.sgroup { padding: 14px 0 0 5px; background: radial-gradient(circle at 2px 1.500px, #b9b9b9 1.200px, transparent 1.300px) 3px 3px / 4.500px 3px repeat-x; }
.sgroup svg { width: 24px; height: 24px; margin-bottom: 6.300px; }
.sgroup.a { height: 163px; border-bottom: 1px solid #b4b4b4; }
.sgroup + .sgroup { padding-top: 15px; }
.docks { width: 232px; margin-right: 5px; display: flex; flex-direction: column; flex: none; }
.dock h2 { margin: 0; height: 25px; background: #dadada; border: 1px solid #b7b7b7; font-size: 14.500px; font-weight: 400; display: flex; align-items: center; padding: 1px 4px 0 4px; flex: none; }
.dock h2 svg { width: 9px; height: 9px; margin-left: 8px; }
.dock h2 svg:first-of-type { margin-left: auto; }
.mini { height: 28px; display: flex; align-items: center; padding: 1px 0 0 5px; }
.mini svg { width: 16px; height: 16px; margin-right: 7px; }
.mini .car { margin: 0 4px 0 -4px; }
.tree { margin: 0; padding: 0; list-style: none; background: #fff; border: 1px solid #85878d; width: 232px; }
.lay { height: 336px; }
.layer { margin-left: 25px; height: 22px; background: #dadada; display: flex; align-items: center; padding-left: 3px; }
.chk { width: 16px; height: 16px; }
.layer i { width: 18px; height: 18px; background: #a76cae; border: 1px solid #5b5080; margin: 0 6px 0 6px; }
.layer strong { font-size: 13.800px; text-decoration: underline; text-decoration-thickness: 1px; text-underline-offset: 2px; }
.second { margin-top: 6px; }
ul.tree { height: 478px; }
.tree li { height: 24px; display: flex; align-items: center; padding-left: 9px; font-size: 13.700px; }
.tree li svg { width: 20px; height: 20px; margin-right: 6px; }
.tree li .ch { width: 7px; height: 11px; margin-right: 12px; }

.canvas { width: 1648px; flex: none; background: #fff; border: 1px solid #85878d; border-top: 0; position: relative; }
.map { width: 1646px; height: 926px; }
.land { fill: #d95b89; stroke: #232323; stroke-width: 1.400px; vector-effect: non-scaling-stroke; stroke-linejoin: round; }
.line path { fill: none; stroke: #232323; stroke-width: 1.300px; vector-effect: non-scaling-stroke; stroke-linejoin: round; }
.line .quay { stroke-width: 1.700px; }
.mark { font: 700 62px "Liberation Sans", sans-serif; fill: none; stroke: #000; stroke-opacity: .1; stroke-width: 1px; }
.arrow { position: absolute; left: 596px; top: -43px; width: 420px; height: 160px; z-index: 2; }

.dialog { position: absolute; left: 1012px; top: 79px; width: 583px; height: 464px; background: #efefef; box-shadow: 0 3px 12px rgba(0,0,0,.38); display: flex; flex-direction: column; }
.dtitle { height: 38px; background: #fff; display: flex; align-items: center; padding-left: 9px; color: #999; font: 15px/20px "Open Sans", sans-serif; letter-spacing: -.31px; flex: none; }
.dtitle span { flex: 1; white-space: nowrap; }
.dtitle em { width: 25px; height: 25px; background: #e3e3e3; color: #fff; font-size: 13px; font-style: normal; text-align: center; margin: 4px 1px 0 0; }
.dtools { height: 26px; display: flex; align-items: center; padding-left: 1px; flex: none; }
.dtools svg { width: 16px; height: 16px; margin: 0 3.500px; }
.dtools hr { width: 1px; height: 16px; border: 0; background: #c0c0c0; margin: 0 3px; }
.dbody { height: 371px; border: 1px solid #85878d; background: #fff; display: flex; flex: none; }
.rowheads { width: 17px; background: #efefef; border-right: 1px solid #dcdcdc; font-size: 13px; }
.rowheads span { display: block; height: 37px; line-height: 39px; background: #fff; text-align: center; }
.rowheads span:first-child { height: 28px; }
table { border-collapse: separate; border-spacing: 0; table-layout: fixed; width: 250px; height: 324px; font-size: 13px; }
th { width: 125px; height: 28px; padding: 0; font-weight: 400; font-size: 13.500px; border-right: 1px solid #dcdcdc; position: relative; }
th svg { position: absolute; left: 57px; top: 1px; width: 10px; height: 5px; }
td { height: 37px; padding: 0 3px 0 0; text-align: right; border-right: 1px solid #d5d5d5; border-bottom: 1px solid #d5d5d5; }
tr:nth-child(even) td { background: #f4f4f4; }
.dfoot { display: flex; padding: 1px 4px; height: 29px; }
.filter { position: relative; font: inherit; color: #000; width: 184px; height: 24px; background: #e1e1e1; border: 1px solid #adadad; padding: 0 0 0 5px; display: flex; align-items: center; gap: 4px; margin-right: auto; white-space: nowrap; }
.filter svg { width: 19px; height: 19px; }
.filter .car { position: absolute; right: -2px; bottom: 2px; }
.vw { width: 25px; height: 24px; border: 1px solid #adadad; background: #e1e1e1; padding: 2px 3px; margin-left: 2px; }
.vw svg { width: 17px; height: 18px; }
.vw.on { border-color: #005499; background: #cce4f7; }

.status { height: 29px; flex: none; display: flex; align-items: center; padding: 2px 0 0 4px; white-space: nowrap; font-size: 13.500px; }
.search { width: 275px; height: 24px; border: 1px solid #777; background: #fff; color: #777; display: flex; align-items: center; padding-left: 8px; gap: 8px; }
.search svg { width: 13px; height: 13px; }
.msg { width: 585px; margin-left: 8px; }
.box { background: #fff; border: 1px solid #777; height: 24px; line-height: 22px; padding: 0 2px 0 3px; }
.c1 { width: 71px; } .coord { width: 111px; font-size: 12.500px; }
.si { width: 18px; height: 18px; margin: 0 10px 0 4px; }
.c2 { width: 35px; margin-left: 5px; } .scale { width: 97px; display: flex; align-items: center; justify-content: space-between; font-size: 12.700px; }
.scale svg { width: 10px; height: 6px; margin-right: 2px; }
.lk { margin: 0 13px 0 5px; }
.c3 { width: 144px; } .mag { width: 87px; }
.c4 { margin-left: 9px; width: 71px; } .rotn { width: 84px; margin-right: 6px; }
.status .spin { height: 24px; font-size: 13px; }
.c5 { margin-left: 6px; width: 75px; }
.c5 + .si { margin-right: 5px; }
.c6 { width: 75px; letter-spacing: -.5px; }
.pz { margin-right: 0; }
.taskedge { height: 2px; flex: none; background: #222; padding-left: 461px; }
.taskedge i { display: block; width: 44px; height: 2px; background: #555; }
```
